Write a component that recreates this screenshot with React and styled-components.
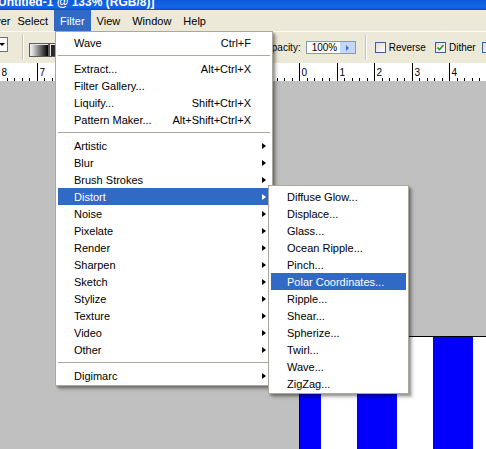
import React from "react";
import styled, { createGlobalStyle } from "styled-components";

const GlobalStyle = createGlobalStyle`
  html, body { margin: 0; padding: 0; overflow: hidden; }
  body { font-family: "Liberation Sans", Arial, sans-serif; font-size: 11px; color: #000; }
`;

const Screen = styled.div`
  position: relative;
  width: 486px;
  height: 449px;
  overflow: hidden;
  display: flex;
  flex-direction: column;
  background: #c0c0c0;
`;

// window title, mostly scrolled off the top
const TitleBar = styled.div`
  flex: none;
  height: 10px;
  overflow: hidden;
  background: linear-gradient(#0b5ad8, #1466ea 70%, #0a4cc8);
  color: #fff;
  font-weight: bold;
  font-size: 12px;
  line-height: 12px;
  white-space: nowrap;
`;

const Title = styled.div`
  margin: -4px 0 0 -2px;
`;

const MenuBar = styled.div`
  flex: none;
  height: 21px;
  display: flex;
  align-items: stretch;
  background: #ece9d8;
  white-space: nowrap;
`;

const MenuTitle = styled.div`
  display: flex;
  align-items: center;
  padding: 0 6px;
  color: ${(p) => (p.$open ? "#fff" : "#000")};
  background: ${(p) => (p.$open ? "#316ac5" : "transparent")};
`;

const CutTitle = styled(MenuTitle)`
  margin-left: -23px;
  padding-right: 1px;
`;

const Toolbar = styled.div`
  flex: none;
  height: 31px;
  display: flex;
  align-items: center;
  background: #ece9d8;
  border-top: 1px solid #fbfaf5;
  white-space: nowrap;
  overflow: hidden;
  font-size: 10px;
`;

const DropBox = styled.div`
  flex: none;
  width: 10px;
  height: 13px;
  margin: 0 0 7px -4px;
  display: flex;
  align-items: center;
  justify-content: center;
  background: #fff;
  border: 1px solid #6f6f6f;

  &::after {
    content: "";
    border-top: 3px solid #000;
    border-left: 3px solid transparent;
    border-right: 3px solid transparent;
  }
`;

const ToolSep = styled.div`
  flex: none;
  width: 0;
  height: 25px;
  margin-left: ${(p) => p.$ml}px;
  border-left: 1px solid #c5c2b2;
  border-right: 1px solid #fff;
`;

const GradSwatch = styled.div`
  flex: none;
  width: 18px;
  height: 12px;
  margin: 4px 0 0 ${(p) => p.$ml}px;
  border: 1px solid #5c5c5c;
  background: ${(p) => p.$fill};
  box-shadow: inset 1px 1px 0 #e8e8e8;
`;

const ToolLabel = styled.span`
  flex: none;
  margin-left: ${(p) => p.$ml}px;
`;

const NumField = styled.div`
  flex: none;
  width: 48px;
  height: 11px;
  margin-left: ${(p) => p.$ml}px;
  display: flex;
  align-items: center;
  background: #fff;
  border: 1px solid #7f9db9;
`;

const NumText = styled.span`
  flex: 1;
  padding-left: 5px;
`;

const NumButton = styled.div`
  width: 15px;
  height: 100%;
  display: flex;
  align-items: center;
  justify-content: center;
  background: #c6d6f6;

  &::after {
    content: "";
    border-left: 3px solid #4d6dc6;
    border-top: 3px solid transparent;
    border-bottom: 3px solid transparent;
  }
`;

const Check = styled.span`
  flex: none;
  width: 9px;
  height: 9px;
  margin-left: ${(p) => p.$ml}px;
  display: flex;
  align-items: center;
  justify-content: center;
  border: 1px solid #3a6190;
  background: linear-gradient(135deg, #dcdcd7, #fff);
`;

const RulerWrap = styled.div`
  flex: none;
  height: 18px;
  background: #fff;
`;

const Workspace = styled.div`
  position: relative;
  flex: 1;
  background: #c0c0c0;
`;

// the open image, scrolled so only its top-left corner shows
const Document = styled.div`
  position: absolute;
  left: 299px;
  top: 255px;
  width: 220px;
  height: 140px;
  border-top: 1px solid #000;
  border-left: 1px solid #000;
  background-color: #fff;
  background-image: linear-gradient(to right, #fff 0 36px, #0000fc 36px 76px);
  background-size: 76px 100%;
  background-repeat: repeat-x;
  background-position: 21px 0;
`;

const Menu = styled.div`
  position: absolute;
  top: ${(p) => p.$top}px;
  left: ${(p) => p.$left}px;
  width: ${(p) => p.$width}px;
  box-sizing: border-box;
  padding: 2px 0 1px;
  background: #fff;
  border: 1px solid #aca899;
  box-shadow: 2px 2px 2px rgba(0, 0, 0, 0.3), 4px 4px 3px rgba(0, 0, 0, 0.15);
  white-space: nowrap;
  z-index: ${(p) => p.$z};
`;

const Item = styled.div`
  display: flex;
  align-items: center;
  height: 17px;
  margin: 0 2px;
  padding-left: 16px;
  color: ${(p) => (p.$active ? "#fff" : "#000")};
  background: ${(p) => (p.$active ? "#316ac5" : "transparent")};
`;

const ItemLabel = styled.span`
  flex: 1;
`;

const Shortcut = styled.span`
  flex: none;
`;

const ArrowCell = styled.span`
  flex: none;
  width: 19px;
  display: flex;
  justify-content: flex-end;
  padding-right: 4px;
  box-sizing: border-box;

  &::after {
    content: "";
    visibility: ${(p) => (p.$sub ? "visible" : "hidden")};
    border-left: 4px solid ${(p) => (p.$active ? "#fff" : "#000")};
    border-top: 3.5px solid transparent;
    border-bottom: 3.5px solid transparent;
  }
`;

const Separator = styled.div`
  height: 9px;
  margin: 0 2px;
  display: flex;
  flex-direction: column;

  &::after {
    content: "";
    margin-top: 4px;
    height: 1px;
    background: #aca899;
  }
`;

const filterMenu = [
  { label: "Wave", key: "Ctrl+F" },
  "-",
  { label: "Extract...", key: "Alt+Ctrl+X" },
  { label: "Filter Gallery..." },
  { label: "Liquify...", key: "Shift+Ctrl+X" },
  { label: "Pattern Maker...", key: "Alt+Shift+Ctrl+X" },
  "-",
  { label: "Artistic", sub: true },
  { label: "Blur", sub: true },
  { label: "Brush Strokes", sub: true },
  { label: "Distort", sub: true, active: true },
  { label: "Noise", sub: true },
  { label: "Pixelate", sub: true },
  { label: "Render", sub: true },
  { label: "Sharpen", sub: true },
  { label: "Sketch", sub: true },
  { label: "Stylize", sub: true },
  { label: "Texture", sub: true },
  { label: "Video", sub: true },
  { label: "Other", sub: true },
  "-",
  { label: "Digimarc", sub: true },
];

const distortMenu = [
  "Diffuse Glow...",
  "Displace...",
  "Glass...",
  "Ocean Ripple...",
  "Pinch...",
  "Polar Coordinates...",
  "Ripple...",
  "Shear...",
  "Spherize...",
  "Twirl...",
  "Wave...",
  "ZigZag...",
];

// ruler marks; the ones under the open menu are left out
const Ruler = () => {
  const marks = [];
  for (let k = -8; k <= 4; k++) {
    const x = 299.5 + Math.round(37.5 * k);
    if (k <= -7 || k >= 0) {
      marks.push(<line key={"M" + k} x1={x} y1={0} x2={x} y2={18} stroke="#000" strokeWidth="1" />);
      marks.push(
        <text key={"T" + k} x={x + 2} y={13} fontSize="10" fontFamily="Liberation Sans, Arial, sans-serif">
          {Math.abs(k)}
        </text>
      );
    }
    for (let i = 1; i < 5; i++) {
      const mx = 299.5 + Math.round(37.5 * k + 7.5 * i);
      marks.push(<line key={`m${k}-${i}`} x1={mx} y1={15} x2={mx} y2={18} stroke="#000" strokeWidth="1" />);
    }
  }
  return (
    <RulerWrap>
      <svg width="486" height="18">{marks}</svg>
    </RulerWrap>
  );
};

const CheckMark = () => (
  <svg width="7" height="7" viewBox="0 0 7 7">
    <path d="M0.5 3.5 L2.5 5.5 L6.5 1" fill="none" stroke="#21a121" strokeWidth="1.6" />
  </svg>
);

export default function App() {
  return (
    <>
      <GlobalStyle />
      <Screen>
        <TitleBar>
          <Title>Untitled-1 @ 133% (RGB/8)]</Title>
        </TitleBar>

        <MenuBar>
          <CutTitle>Layer</CutTitle>
          <MenuTitle>Select</MenuTitle>
          <MenuTitle $open>Filter</MenuTitle>
          <MenuTitle>View</MenuTitle>
          <MenuTitle>Window</MenuTitle>
          <MenuTitle>Help</MenuTitle>
        </MenuBar>

        <Toolbar>
          <DropBox />
          <ToolSep $ml={14} />
          <GradSwatch $ml={5} $fill="linear-gradient(to right, #fff, #000)" />
          <GradSwatch $ml={0} $fill="linear-gradient(to right, #222, #555)" />
          <ToolLabel $ml={195}>Opacity:</ToolLabel>
          <NumField $ml={5}>
            <NumText>100%</NumText>
            <NumButton />
          </NumField>
          <ToolSep $ml={9} />
          <Check $ml={8} />
          <ToolLabel $ml={3}>Reverse</ToolLabel>
          <Check $ml={9}>
            <CheckMark />
          </Check>
          <ToolLabel $ml={3}>Dither</ToolLabel>
          <Check $ml={6} />
        </Toolbar>

        <Ruler />

        <Workspace>
          <Document />
        </Workspace>

        <Menu $top={31} $left={55} $width={218} $z={2}>
          {filterMenu.map((it, i) =>
            it === "-" ? (
              <Separator key={i} />
            ) : (
              <Item key={i} $active={it.active}>
                <ItemLabel>{it.label}</ItemLabel>
                {it.key && <Shortcut>{it.key}</Shortcut>}
                <ArrowCell $sub={it.sub} $active={it.active} />
              </Item>
            )
          )}
        </Menu>

        <Menu $top={185} $left={268} $width={141} $z={3}>
          {distortMenu.map((label) => (
            <Item key={label} $active={label === "Polar Coordinates..."}>
              <ItemLabel>{label}</ItemLabel>
            </Item>
          ))}
        </Menu>
      </Screen>
    </>
  );
}
